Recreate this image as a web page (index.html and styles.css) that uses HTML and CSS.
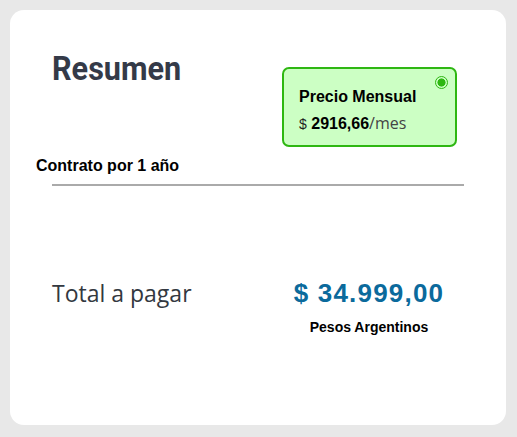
FILE: index.html
```html
<!DOCTYPE html>
<html lang="es">
<head>
  <meta charset="UTF-8" />
  <meta name="viewport" content="width=device-width, initial-scale=1.0"/>
  <title>Resumen</title>
  <link rel="stylesheet" href="styles.css">
</head>
<body>
  <div class="card">
    <div class="header">
      <h1>Resumen</h1>
      <div class="plan">
        <span class="radio"></span>
        <h3>Precio Mensual</h3>
        <p class="plan-price"><span class="cur">$</span> <b>2916,66</b><span class="per">/mes</span></p>
      </div>
    </div>

    <p class="contrato">Contrato por 1 año</p>
    <hr class="divider">

    <div class="total">
      <span class="total-label">Total a pagar</span>
      <div class="total-amount">
        <span class="amount">$ 34.999,00</span>
        <span class="moneda">Pesos Argentinos</span>
      </div>
    </div>
  </div>
</body>
</html>
```

FILE: styles.css
```css
body {
  margin: 0;
  padding: 10px;
  background: #e8e8e8;
  font-family: "Liberation Sans", Arial, sans-serif;
  color: #000;
}
.card {
  width: 496px;
  height: 415px;
  box-sizing: border-box;
  background: #fff;
  border-radius: 14px;
  padding: 0 0 0 26px;
}
.header {
  display: flex;
  justify-content: space-between;
  align-items: flex-start;
  padding: 38px 49px 0 16px;
  height: 137px;
  box-sizing: border-box;
}
h1 {
  margin: 0;
  font-family: Roboto, sans-serif;
  font-weight: 700;
  font-size: 34px;
  line-height: 40px;
  color: #343a48;
  transform: scaleX(0.9);
  transform-origin: left center;
}
.plan {
  position: relative;
  margin-top: 19px;
  width: 175px;
  height: 80px;
  box-sizing: border-box;
  background: #ccffc4;
  border: 2px solid #2eb712;
  border-radius: 7px;
  padding: 18px 0 0 15px;
}
.radio {
  position: absolute;
  top: 7px;
  right: 7px;
  width: 11px;
  height: 11px;
  border: 1.5px solid #2eb712;
  border-radius: 50%;
  background: radial-gradient(circle, #2eb712 0 3.8px, transparent 4.3px);
}
.plan h3 {
  margin: 0;
  font-size: 16px;
  line-height: 20px;
}
.plan-price {
  margin: 6px 0 0;
  font-size: 16px;
  line-height: 20px;
}
.plan-price .cur {
  font-size: 14px;
  color: #222;
}
.plan-price .per {
  font-family: "Open Sans", sans-serif;
  font-size: 16px;
  color: #444;
}
.contrato {
  margin: 10px 0 0;
  font-weight: 700;
  font-size: 16px;
  line-height: 18px;
}
.divider {
  margin: 9px 0 0 16px;
  width: 412px;
  height: 2px;
  border: none;
  background: #aaa;
}
.total {
  display: flex;
  align-items: flex-start;
  margin-top: 92px;
  padding-left: 16px;
}
.total-label {
  width: 232px;
  font-family: "Open Sans", sans-serif;
  font-size: 23px;
  line-height: 31px;
  color: #333840;
}
.total-amount {
  display: flex;
  flex-direction: column;
  align-items: center;
  width: 170px;
}
.amount {
  font-weight: 700;
  font-size: 26px;
  letter-spacing: 1.2px;
  line-height: 30px;
  color: #0b6a9c;
}
.moneda {
  margin-top: 10px;
  font-weight: 700;
  font-size: 14px;
  line-height: 18px;
}
```
